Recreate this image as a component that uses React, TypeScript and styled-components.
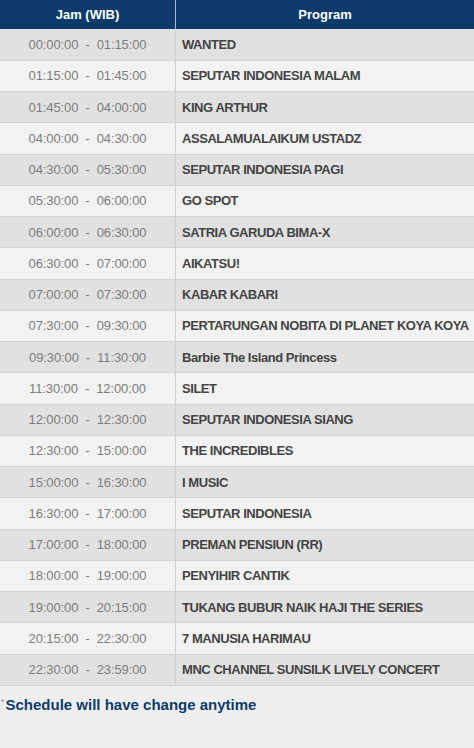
import React from "react";
import styled, { createGlobalStyle } from "styled-components";

const GlobalStyle = createGlobalStyle`
  html, body {
    margin: 0;
    padding: 0;
    background: #efefef;
  }
  body {
    font-family: "Liberation Sans", Arial, sans-serif;
  }
`;

const Wrapper = styled.div`
  width: 474px;
  height: 748px;
  background: #efefef;
  overflow: hidden;
`;

const Table = styled.table`
  width: 100%;
  border-collapse: collapse;
  table-layout: fixed;
  font-size: 13px;
`;

const HeadCell = styled.th<{ $w?: string }>`
  width: ${(p) => p.$w || "auto"};
  height: 29px;
  padding: 0;
  background: #0c3b6b;
  color: #ffffff;
  font-weight: bold;
  text-align: center;
  border-right: 1px solid #a9b8c8;
  &:last-child {
    border-right: none;
  }
`;

const Row = styled.tr<{ $odd: boolean }>`
  height: 31.25px;
  background: ${(p) => (p.$odd ? "#e1e1e1" : "#f2f2f2")};
  border-bottom: 1px solid #d2d2d2;
`;

const TimeCell = styled.td`
  padding: 0;
  text-align: center;
  color: #7d7d7d;
  white-space: pre;
  letter-spacing: -0.1px;
  border-right: 1px solid #cfcfcf;
`;

const ProgramCell = styled.td`
  padding: 0 0 0 6px;
  color: #444444;
  font-weight: bold;
  letter-spacing: -0.45px;
  white-space: nowrap;
  overflow: hidden;
`;

const Note = styled.div`
  display: flex;
  align-items: flex-start;
  padding: 10px 0 0 1px;
  color: #0c3b6b;
  font-size: 15px;
  font-weight: bold;
`;

const Star = styled.span`
  color: #8a8a8a;
  font-size: 9px;
  font-weight: normal;
  margin-right: 1px;
  line-height: 12px;
`;

const schedule: [string, string, string][] = [
  ["00:00:00", "01:15:00", "WANTED"],
  ["01:15:00", "01:45:00", "SEPUTAR INDONESIA MALAM"],
  ["01:45:00", "04:00:00", "KING ARTHUR"],
  ["04:00:00", "04:30:00", "ASSALAMUALAIKUM USTADZ"],
  ["04:30:00", "05:30:00", "SEPUTAR INDONESIA PAGI"],
  ["05:30:00", "06:00:00", "GO SPOT"],
  ["06:00:00", "06:30:00", "SATRIA GARUDA BIMA-X"],
  ["06:30:00", "07:00:00", "AIKATSU!"],
  ["07:00:00", "07:30:00", "KABAR KABARI"],
  ["07:30:00", "09:30:00", "PERTARUNGAN NOBITA DI PLANET KOYA KOYA"],
  ["09:30:00", "11:30:00", "Barbie The Island Princess"],
  ["11:30:00", "12:00:00", "SILET"],
  ["12:00:00", "12:30:00", "SEPUTAR INDONESIA SIANG"],
  ["12:30:00", "15:00:00", "THE INCREDIBLES"],
  ["15:00:00", "16:30:00", "I MUSIC"],
  ["16:30:00", "17:00:00", "SEPUTAR INDONESIA"],
  ["17:00:00", "18:00:00", "PREMAN PENSIUN (RR)"],
  ["18:00:00", "19:00:00", "PENYIHIR CANTIK"],
  ["19:00:00", "20:15:00", "TUKANG BUBUR NAIK HAJI THE SERIES"],
  ["20:15:00", "22:30:00", "7 MANUSIA HARIMAU"],
  ["22:30:00", "23:59:00", "MNC CHANNEL SUNSILK LIVELY CONCERT"],
];

export default function App() {
  return (
    <Wrapper>
      <GlobalStyle />
      <Table>
        <thead>
          <tr>
            <HeadCell $w="175px">Jam (WIB)</HeadCell>
            <HeadCell>Program</HeadCell>
          </tr>
        </thead>
        <tbody>
          {schedule.map(([start, end, title], i) => (
            <Row key={start} $odd={i % 2 === 0}>
              <TimeCell>{`${start}  -  ${end}`}</TimeCell>
              <ProgramCell>{title}</ProgramCell>
            </Row>
          ))}
        </tbody>
      </Table>
      <Note>
        <Star>*</Star>
        Schedule will have change anytime
      </Note>
    </Wrapper>
  );
}
